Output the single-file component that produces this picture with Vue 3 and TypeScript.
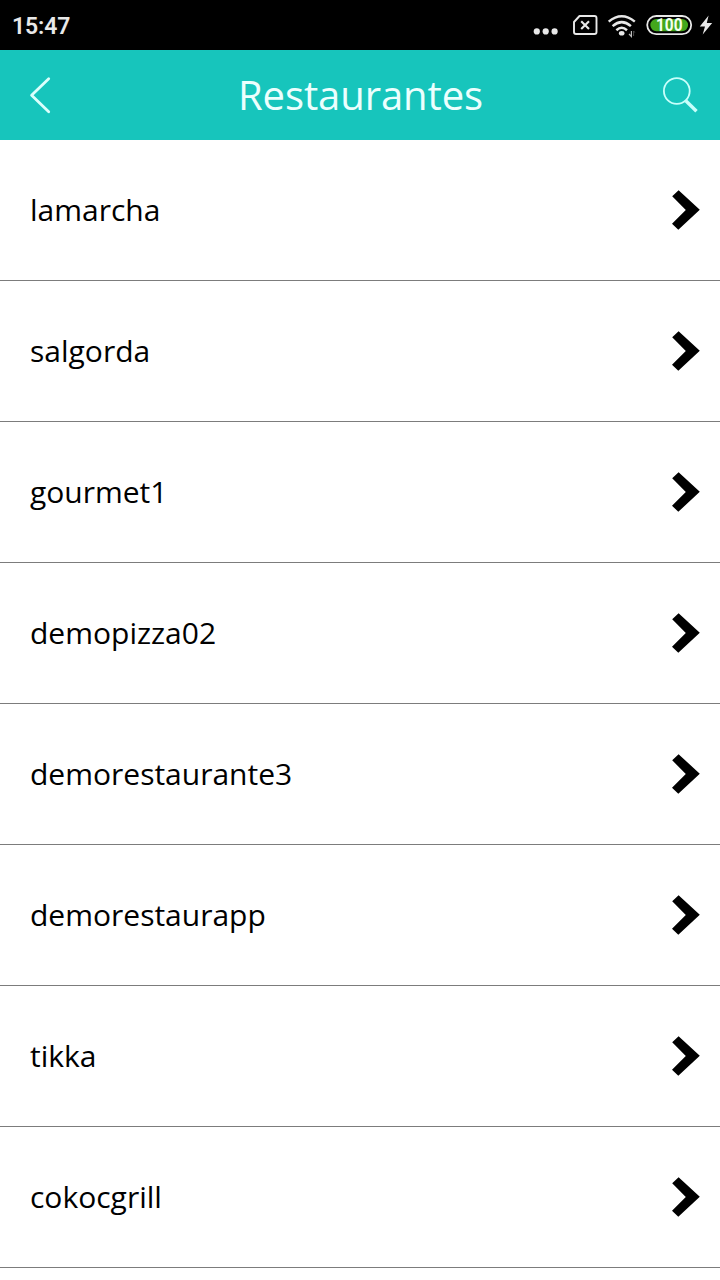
<script setup lang="ts">
import { ref } from 'vue'

interface Restaurant {
  name: string
}

const restaurants = ref<Restaurant[]>([
  { name: 'lamarcha' },
  { name: 'salgorda' },
  { name: 'gourmet1' },
  { name: 'demopizza02' },
  { name: 'demorestaurante3' },
  { name: 'demorestaurapp' },
  { name: 'tikka' },
  { name: 'cokocgrill' },
])
</script>

<template>
  <div class="screen">
    <div class="status">
      <span class="clock">15:47</span>
      <svg class="status-icons" width="190" height="50" viewBox="530 0 190 50" fill="none">
        <g fill="#e8e8e8">
          <circle cx="536.8" cy="31.4" r="3.1" />
          <circle cx="545.7" cy="31.4" r="3.1" />
          <circle cx="554.6" cy="31.4" r="3.1" />
        </g>
        <path d="M579.5 16H594.5Q596.5 16 596.5 18V32Q596.5 34 594.5 34H576Q574 34 574 32V22Z" stroke="#e8e8e8" stroke-width="1.9" stroke-linejoin="round" />
        <path d="M581.2 21.2L589 29M589 21.2L581.2 29" stroke="#e8e8e8" stroke-width="2.1" />
        <g stroke="#e8e8e8" stroke-width="2.5">
          <path d="M608.7 21.6Q621.7 10.8 634.8 21.6" />
          <path d="M612.6 26.1Q621.7 18.1 630.9 26.1" />
          <path d="M616.4 30.2Q621.7 25.4 627 30.2" />
        </g>
        <ellipse cx="621.7" cy="33.2" rx="2.8" ry="2.3" fill="#e8e8e8" />
        <path d="M631.4 31V36.5L629 34" stroke="#bbb" stroke-width="1.2" />
        <path d="M633.6 36V31L634.8 32.5" stroke="#555" stroke-width="0.9" />
        <rect x="647.2" y="16" width="44" height="18.2" rx="9.1" stroke="#e8e8e8" stroke-width="1.8" />
        <rect x="650.3" y="18.9" width="37.8" height="12.4" rx="6.2" fill="#43a71d" />
        <text class="battery-label" x="656" y="31.2" textLength="26.5" lengthAdjust="spacingAndGlyphs">100</text>
        <path d="M708.6 15.4L699.8 26.5H705L702.7 34.6L712.2 22.9H706.8Z" fill="#e8e8e8" />
      </svg>
    </div>

    <header class="bar">
      <svg width="80" height="90" viewBox="0 0 80 90" fill="none">
        <path d="M48.7 28.7L31.6 45.2L48.7 61.7" stroke="#dcfffc" stroke-width="2.8" stroke-linecap="round" stroke-linejoin="round" />
      </svg>
      <h1 class="title">Restaurantes</h1>
      <svg width="80" height="90" viewBox="0 0 80 90" fill="none" stroke="#c9fffb">
        <circle cx="36.8" cy="41" r="12.9" stroke-width="1.8" />
        <path d="M45.8 50.7L56.5 61.3" stroke-width="3.4" />
      </svg>
    </header>

    <ul class="list">
      <li v-for="item in restaurants" :key="item.name" class="row">
        <span class="name">{{ item.name }}</span>
        <svg width="30" height="40" viewBox="0 0 30 40">
          <path d="M8.6 0.2L29.8 19.8L8.3 39.8L2 33.7L15.8 19.9L2.2 6.3Z" fill="#000" />
        </svg>
      </li>
    </ul>
  </div>
</template>

<style>
body {
  margin: 0;
  background: #fff;
}
</style>

<style scoped>
.screen {
  width: 720px;
  height: 1280px;
  overflow: hidden;
  background: #fff;
  font-family: 'Open Sans', 'Noto Sans', sans-serif;
}
.status {
  display: flex;
  align-items: center;
  justify-content: space-between;
  height: 50px;
  background: #000;
}
.clock {
  padding: 3px 0 0 12px;
  color: #e8e8e8;
  font: 600 23px/28px Roboto, sans-serif;
  letter-spacing: -0.1px;
}
.status-icons {
  display: block;
}
.battery-label {
  fill: #f4fff0;
  font: 700 17.5px Roboto, sans-serif;
}
.bar {
  display: flex;
  align-items: center;
  justify-content: space-between;
  height: 90px;
  background: #17c5bc;
}
.title {
  margin: 0;
  color: #ecfffe;
  font-size: 40px;
  font-weight: 400;
  line-height: 90px;
  letter-spacing: -0.08px;
  padding-left: 1px;
}
.list {
  margin: 0;
  padding: 0;
  list-style: none;
}
.row {
  display: flex;
  align-items: center;
  justify-content: space-between;
  height: 140px;
  padding: 0 20px 0 30px;
  border-bottom: 1px solid #7c7c7c;
}
.name {
  color: #000;
  font-size: 30px;
  line-height: 40px;
}
</style>
